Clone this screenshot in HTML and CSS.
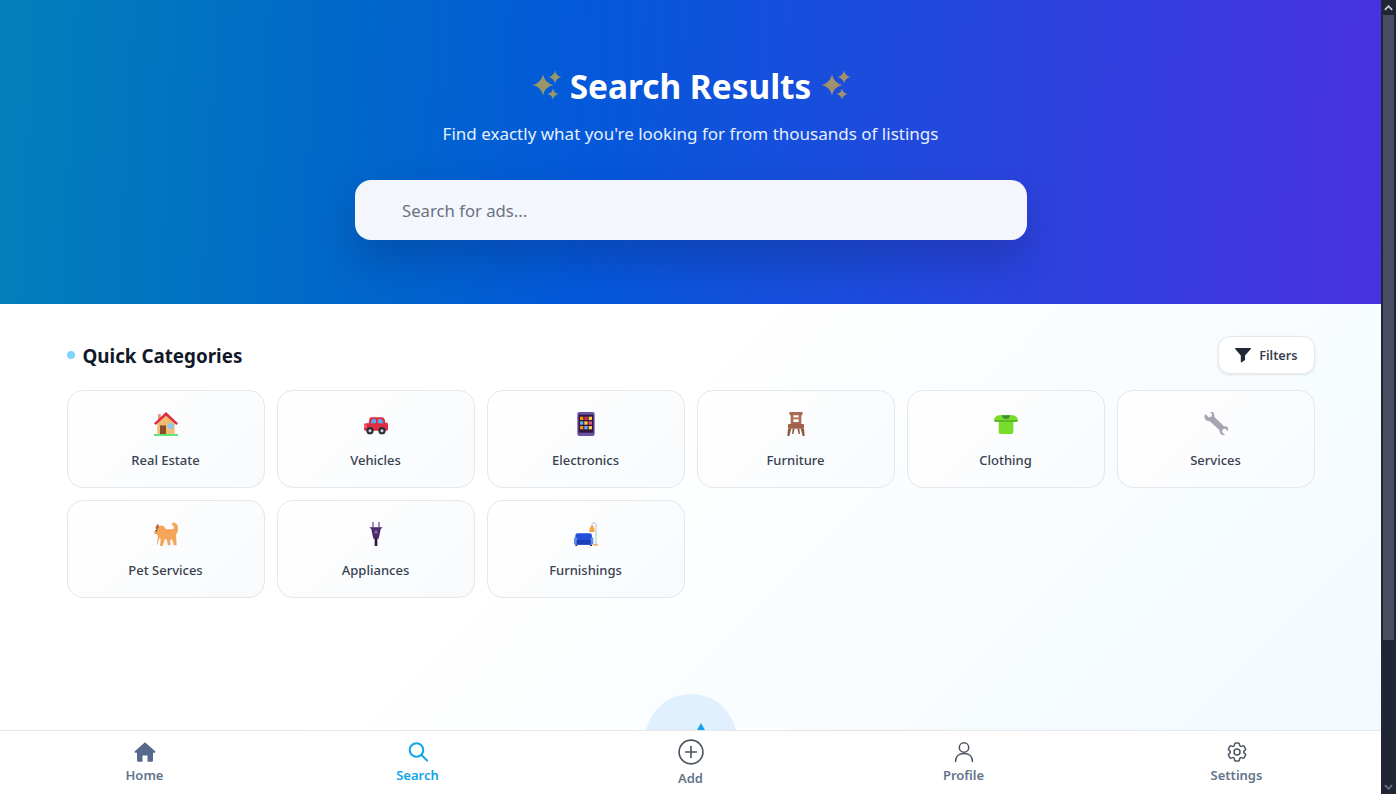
FILE: index.html
```html
<!DOCTYPE html>
<html lang="en">
<head>
<meta charset="utf-8">
<title>Search Results</title>
<link rel="stylesheet" href="styles.css">
</head>
<body>
<svg class="defs" width="0" height="0" aria-hidden="true">
  <symbol id="sparkle" viewBox="0 0 32 32">
    <path d="M13 4.500 Q14.900 13.100 23.500 15 Q14.900 16.900 13 25.500 Q11.100 16.900 2.500 15 Q11.100 13.100 13 4.500Z"/>
    <path d="M25 .5 Q26.200 5.800 31.500 7 Q26.200 8.200 25 13.500 Q23.800 8.200 18.500 7 Q23.800 5.800 25 .5Z"/>
    <path d="M23 18.500 Q24 23 28.500 24 Q24 25 23 29.500 Q22 25 17.500 24 Q22 23 23 18.500Z"/>
  </symbol>
</svg>
<div class="window">
  <div class="page">
    <header class="hero">
      <h1 class="hero-title">
        <svg class="sparkle"><use href="#sparkle"/></svg>
        <span>Search Results</span>
        <svg class="sparkle"><use href="#sparkle"/></svg>
      </h1>
      <p class="hero-sub">Find exactly what you're looking for from thousands of listings</p>
      <div class="search-box">
        <input class="search-input" type="text" placeholder="Search for ads...">
      </div>
    </header>

    <main class="content">
      <section class="section">
        <div class="section-head">
          <h2 class="section-title"><span class="dot"></span>Quick Categories</h2>
          <button class="filter-btn" type="button">
            <svg class="filter-icon" viewBox="0 0 16 16"><path d="M.6 1h14.800c.5 0 .7.6.4 1L10 8.600V13l-3.600 2.400c-.3.2-.6 0-.6-.3V8.600L.2 2C-.1 1.600.1 1 .6 1Z"/></svg>
            Filters
          </button>
        </div>
        <div class="grid">
          <a class="card">
            <svg class="emoji" viewBox="0 0 36 36">
              <rect x="6" y="3" width="4" height="9" fill="#d99e82"/>
              <path d="M5 16 18 5l13 11v17H5Z" fill="#f4bc72"/>
              <rect x="9" y="20" width="9" height="13" fill="#8a4f2a"/>
              <circle cx="25" cy="21" r="4.500" fill="#88c9f9"/>
              <path d="M18 0 0 17l2.500 2.500L18 5.500l15.500 14L36 17Z" fill="#dd2e44"/>
              <rect x="0" y="33" width="36" height="3" fill="#5ee67b"/>
            </svg>
            <span class="card-label">Real Estate</span>
          </a>
          <a class="card">
            <svg class="emoji" viewBox="0 0 36 36">
              <path d="M11 8h16c2 0 3 1 4 3l1 5h2c1 0 2 1 2 2v8c0 1-1 2-2 2H2c-1 0-2-1-2-2v-6c0-2 1-3 3-3h4l1-6c.3-2 1-3 3-3Z" fill="#dd2e44"/>
              <rect x="0" y="19" width="4" height="5" fill="#f4606e"/>
              <path d="M12 11h6v6h-8Z" fill="#55acee"/>
              <path d="M21 11h6l2 6h-8Z" fill="#55acee"/>
              <circle cx="9" cy="28" r="5.500" fill="#292f33"/><circle cx="9" cy="28" r="2.300" fill="#ccd6dd"/>
              <circle cx="27" cy="28" r="5.500" fill="#292f33"/><circle cx="27" cy="28" r="2.300" fill="#ccd6dd"/>
            </svg>
            <span class="card-label">Vehicles</span>
          </a>
          <a class="card">
            <svg class="emoji" viewBox="0 0 36 36">
              <rect x="5" y="0" width="26" height="36" rx="3" fill="#6a51a3"/>
              <rect x="7" y="4" width="22" height="27" fill="#31163f"/>
              <g fill="#f4900c"><rect x="9" y="7" width="5" height="5"/><rect x="9" y="21" width="5" height="5"/></g>
              <g fill="#ffcc4d"><rect x="22" y="7" width="5" height="5"/><rect x="15.500" y="14" width="5" height="5"/><rect x="22" y="21" width="5" height="5"/></g>
              <g fill="#5dadec"><rect x="9" y="14" width="5" height="5"/><rect x="15.500" y="21" width="5" height="5"/></g>
              <rect x="15.500" y="7" width="5" height="5" fill="#dd2e44"/>
              <rect x="22" y="14" width="5" height="5" fill="#e8596e"/>
            </svg>
            <span class="card-label">Electronics</span>
          </a>
          <a class="card">
            <svg class="emoji" viewBox="0 0 36 36">
              <rect x="8" y="0" width="20" height="5" rx="2" fill="#a86a52"/>
              <path d="M10 4h4v11h8V4h4v16H10Z" fill="#a86a52"/>
              <rect x="12" y="8" width="12" height="3" fill="#b9785d"/>
              <rect x="6" y="18" width="24" height="7" rx="1.500" fill="#a0614a"/>
              <path d="M6 25h5L8 36H5ZM25 25h5l1 11h-3ZM13 25h3l-2 8h-2ZM20 25h3l1 8h-2Z" fill="#8e5540"/>
            </svg>
            <span class="card-label">Furniture</span>
          </a>
          <a class="card">
            <svg class="emoji" viewBox="0 0 36 36">
              <path d="M12 5H8C4 5 0 9 0 12c0 2 2 3 3 3h4v15c0 2 1 3 3 3h16c2 0 3-1 3-3V15h4c1 0 3-1 3-3 0-3-4-7-8-7h-4Z" fill="#77dd2a"/>
              <path d="M11 5h14l-3 4.500c-2 1.500-6 1.500-8 0Z" fill="#3e8f2c"/>
              <path d="M0 12c0 2 2 3 3 3h30c1 0 3-1 3-3Z" fill="#5cb82a"/>
            </svg>
            <span class="card-label">Clothing</span>
          </a>
          <a class="card">
            <svg class="emoji" viewBox="0 0 36 36">
              <path d="M2 3 7 8l4-1 1-4-5-5C12-3 16 1 15.500 6c0 1 .2 1.500 1 2.300L30 21.500c5-1 8 3 6.500 8L32 25l-4 1-1 4 4.500 4.500c-5 1.500-9-2-8-7L9.500 14.500c-.8-.8-1.500-1-2.500-1C2 14-1.500 8 2 3Z" fill="#aaa3b4"/>
            </svg>
            <span class="card-label">Services</span>
          </a>
          <a class="card">
            <svg class="emoji" viewBox="0 0 36 36">
              <path d="M7 7c3-3 7-2 9 1l2 3h9c2 0 3-1 3-3 0-2-3-3-3-5 0-2 2-3 4-2 3 1 5 4 5 8 0 5-1 8-3 10l1 16h-4l-3-9-3 1 1 8h-4l-2-9h-3l-3 10h-4l1-11-2-1-3 10H4l2-13-2-3H2c-1 0-2-2-2-3l3-3Z" fill="#f4a55a"/>
              <path d="M8 6 5 3 2 9l3 3Z" fill="#b8652e"/>
              <circle cx="3.500" cy="13" r="1.200" fill="#292f33"/>
            </svg>
            <span class="card-label">Pet Services</span>
          </a>
          <a class="card">
            <svg class="emoji" viewBox="0 0 36 36">
              <rect x="12" y="0" width="3" height="9" fill="#a58fb5"/>
              <rect x="21" y="0" width="3" height="9" fill="#a58fb5"/>
              <path d="M8 8h20l-3 3-3 14h-8l-3-14Z" fill="#4c2a6b"/>
              <circle cx="18" cy="15" r="2.500" fill="#8a66a8"/>
              <rect x="16" y="24" width="4" height="12" fill="#31163f"/>
            </svg>
            <span class="card-label">Appliances</span>
          </a>
          <a class="card">
            <svg class="emoji" viewBox="0 0 36 36">
              <path d="M33 34V4c0-2-1-3-3-3s-3 1-3 3v2" fill="none" stroke="#b9bdc6" stroke-width="1.500"/>
              <path d="M27 5c-3 2-4 6-4 10h8c0-3-.5-8-4-10Z" fill="#f4a83c"/>
              <path d="M29 33h7v2.500h-7Z" fill="#f4b050"/>
              <rect x="2" y="17" width="25" height="17" rx="3.500" fill="#2450d8"/>
              <rect x="0" y="23" width="5" height="11" rx="2" fill="#5c8fe8"/>
              <rect x="25" y="23" width="4" height="11" rx="2" fill="#5c8fe8"/>
              <rect x="4" y="27" width="21" height="7" fill="#1b3fb8"/>
              <rect x="2" y="34" width="3" height="2" fill="#16308a"/>
              <rect x="24" y="34" width="3" height="2" fill="#16308a"/>
            </svg>
            <span class="card-label">Furnishings</span>
          </a>
        </div>
      </section>
      <div class="fab">
        <svg class="fab-arrow" viewBox="0 0 10 8"><path d="M5 0 9.500 8H.5Z"/></svg>
      </div>
    </main>

    <nav class="nav">
      <a class="nav-item">
        <svg class="nav-icon" viewBox="0 0 24 24"><path class="fill" d="M12 2.300 1.800 11.300c-.6.600-.2 1.500.6 1.500H4v7.400c0 .9.700 1.600 1.600 1.600h3.900v-6.300h5V21.800h3.900c.9 0 1.600-.7 1.600-1.600v-7.400h1.600c.8 0 1.200-.9.600-1.500Z"/></svg>
        <span>Home</span>
      </a>
      <a class="nav-item active">
        <svg class="nav-icon" viewBox="0 0 24 24"><circle class="line" cx="10.500" cy="10" r="6.800"/><path class="line" d="m15.500 15 5.500 5.500"/></svg>
        <span>Search</span>
      </a>
      <a class="nav-item add">
        <svg class="nav-icon" viewBox="0 0 24 24"><circle class="line" cx="12" cy="12" r="11"/><path class="line" d="M12 7v10M7 12h10"/></svg>
        <span>Add</span>
      </a>
      <a class="nav-item">
        <svg class="nav-icon" viewBox="0 0 24 24"><circle class="line" cx="12" cy="7.500" r="4.700"/><path class="line" d="M3.500 21.500c0-5 3.500-8 8.500-8s8.500 3 8.500 8"/></svg>
        <span>Profile</span>
      </a>
      <a class="nav-item">
        <svg class="nav-icon" viewBox="0 0 24 24"><path class="line" d="M9.594 3.940c.09-.542.56-.94 1.110-.94h2.593c.55 0 1.020.398 1.110.94l.213 1.281c.063.374.313.686.645.87.074.04.147.083.22.127.324.196.72.257 1.075.124l1.217-.456a1.125 1.125 0 0 1 1.370.49l1.296 2.247a1.125 1.125 0 0 1-.26 1.431l-1.003.827c-.293.24-.438.613-.431.992a6.759 6.759 0 0 1 0 .255c-.007.378.138.75.43.99l1.005.828c.424.35.534.954.26 1.430l-1.298 2.247a1.125 1.125 0 0 1-1.369.491l-1.217-.456c-.355-.133-.75-.072-1.076.124a6.570 6.570 0 0 1-.22.128c-.331.183-.581.495-.644.869l-.213 1.280c-.09.543-.56.941-1.110.941h-2.594c-.55 0-1.020-.398-1.110-.94l-.213-1.281c-.062-.374-.312-.686-.644-.87a6.520 6.520 0 0 1-.22-.127c-.325-.196-.72-.257-1.076-.124l-1.217.456a1.125 1.125 0 0 1-1.369-.49l-1.297-2.247a1.125 1.125 0 0 1 .26-1.431l1.004-.827c.292-.24.437-.613.43-.992a6.932 6.932 0 0 1 0-.255c.007-.378-.138-.75-.43-.99l-1.004-.828a1.125 1.125 0 0 1-.26-1.430l1.297-2.247a1.125 1.125 0 0 1 1.370-.491l1.216.456c.356.133.751.072 1.076-.124.072-.044.146-.087.22-.128.332-.183.582-.495.644-.869l.214-1.281Z"/><circle class="line" cx="12" cy="12" r="3"/></svg>
        <span>Settings</span>
      </a>
    </nav>
  </div>
  <div class="scrollbar">
    <svg class="sb-arrow" viewBox="0 0 10 6"><path d="M1 5l4-4 4 4" fill="none" stroke-width="2"/></svg>
    <div class="sb-thumb"></div>
    <svg class="sb-arrow down" viewBox="0 0 10 6"><path d="M1 1l4 4 4-4" fill="none" stroke-width="2"/></svg>
  </div>
</div>
</body>
</html>
```

FILE: styles.css
```css
* { box-sizing: border-box; }
html, body { margin: 0; height: 100%; overflow: hidden; }
body { font-family: "Noto Sans", "Open Sans", sans-serif; color: #111827; background: #fff; }
.defs { display: block; height: 0; }
.window { display: flex; height: 794px; width: 1396px; }
.page { width: 1381px; display: flex; flex-direction: column; height: 794px; }

.hero {
  height: 304px; flex: none; padding-top: 63px;
  display: flex; flex-direction: column; align-items: center;
  background: linear-gradient(93deg, #047fba 0%, #0068c9 25%, #0459da 42%, #4a32e0 100%);
  color: #fff;
}
.hero-title {
  margin: 0; display: flex; align-items: center; gap: 8px; height: 46px;
  font-size: 33.400px; font-weight: 700; line-height: 46px;
}
.sparkle { width: 32px; height: 32px; fill: #fbbf24; opacity: .6; }
.hero-sub { margin: 13px 0 0; font-size: 17px; line-height: 24px; color: #e5effe; }
.search-box {
  margin-top: 34px; width: 672px; height: 60px; border-radius: 16px;
  background: linear-gradient(135deg, #f3f7fd, #f5f5fd);
  box-shadow: 0 20px 40px rgba(15, 23, 80, .25);
}
.search-input {
  width: 100%; height: 100%; border: 0; outline: 0; background: transparent;
  padding: 0 20px 0 47.500px; font: 400 16.700px "Noto Sans", sans-serif; color: #111827;
}
.search-input::placeholder { color: #6b7280; opacity: 1; }

.content {
  flex: 1; position: relative; overflow: hidden;
  background: linear-gradient(135deg, #fff 40%, #f2faff 100%);
}
.section { width: 1248px; margin: 0 auto; padding-top: 32px; }
.section-head { display: flex; justify-content: space-between; align-items: center; height: 38px; margin-bottom: 16px; }
.section-title { margin: 0; display: flex; align-items: center; font-size: 18.800px; font-weight: 700; color: #111827; position: relative; top: 1px; }
.dot { width: 8px; height: 8px; border-radius: 50%; background: #7dd3fc; margin-right: 8px; position: relative; top: -1px; }
.filter-btn {
  display: flex; align-items: center; gap: 8px; height: 38px; padding: 0 16px;
  border: 1px solid #e5e7eb; border-radius: 12px; background: #fff;
  box-shadow: 0 1px 3px rgba(0, 0, 0, .1);
  font: 600 12.700px "Noto Sans", sans-serif; color: #374151;
}
.filter-icon { width: 16px; height: 16px; fill: #1f2937; }

.grid { display: grid; grid-template-columns: repeat(6, 198px); gap: 12px; }
.card {
  height: 98px; display: flex; flex-direction: column; align-items: center;
  padding-top: 21px; border: 1px solid #e5e7eb; border-radius: 16px;
  background: linear-gradient(135deg, #fff, #f8fafc);
}
.emoji { width: 24px; height: 24px; display: block; }
.card-label { margin-top: 14px; font-size: 13px; line-height: 20px; font-weight: 500; color: #374151; }

.fab {
  position: absolute; left: 645px; top: 390px; width: 92px; height: 92px;
  border-radius: 50%; background: #e0f0fe;
}
.fab-arrow { position: absolute; left: 51px; top: 29px; width: 10px; height: 8px; fill: #0ea5e9; }

.nav {
  height: 64px; flex: none; padding: 0 8px; display: grid; grid-template-columns: repeat(5, 1fr);
  background: #fff; border-top: 1px solid #e5e7eb; position: relative; z-index: 1;
}
.nav-item {
  display: flex; flex-direction: column; align-items: center; padding-top: 9px;
  font-size: 13px; font-weight: 600; line-height: 18px; color: #64748b;
}
.nav-icon { width: 24px; height: 24px; display: block; margin-bottom: 2px; }
.nav-icon .fill { fill: #56698a; }
.nav-icon .line { fill: none; stroke: #4b5563; stroke-width: 1.500; stroke-linecap: round; stroke-linejoin: round; }
.nav-item.active { color: #0ea5e9; }
.nav-item.active .line { stroke: #0ea5e9; stroke-width: 2; }
.nav-item.add { padding-top: 8px; }
.nav-item.add span { margin-top: 2px; }
.nav-item.add .nav-icon { width: 26px; height: 26px; }

.scrollbar {
  width: 15px; height: 794px; flex: none; background: #202634;
  display: flex; flex-direction: column; align-items: center; justify-content: space-between;
}
.sb-arrow { width: 9px; height: 6px; stroke: #c9ccd3; margin: 5px 0 4px; flex: none; }
.sb-arrow.down { stroke: #6b7080; }
.sb-thumb { width: 11px; height: 625px; background: #4a4e63; margin-bottom: auto; }
```
